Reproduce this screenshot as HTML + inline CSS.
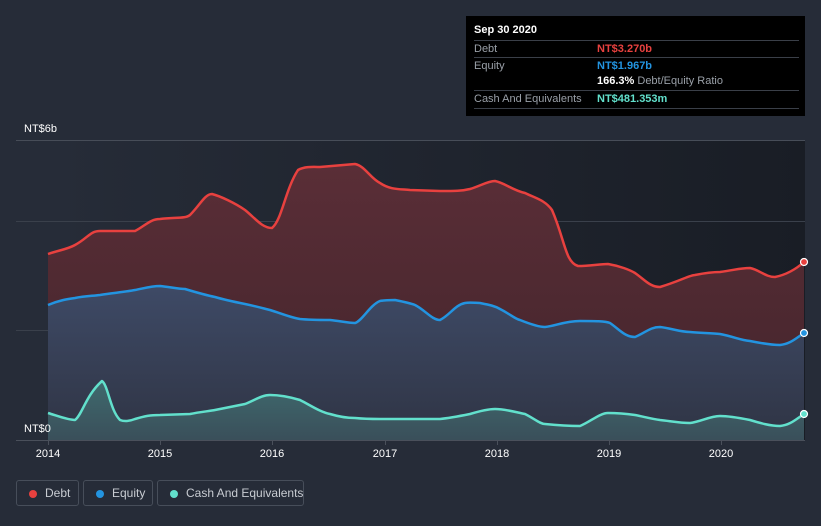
<!DOCTYPE html>
<html style="margin:0;width:821px;height:526px;overflow:hidden"><head><meta charset="utf-8"><style>
body{margin:0;width:821px;height:526px;background:#262c38;font-family:"Liberation Sans",sans-serif;overflow:hidden;position:relative}
.tt{position:absolute;left:466px;top:16px;width:339px;height:100px;background:#000;color:#fff;font-size:11px}
.tt .h{position:absolute;left:8px;top:8px;font-weight:bold}
.row{position:absolute;left:8px;width:325px;height:17px;border-top:1px solid #3a3f48;line-height:16px}
.row .l{position:absolute;left:0;color:#9aa0a8;white-space:nowrap}
.row .v{position:absolute;left:123px;font-weight:bold;white-space:nowrap}
.lg{position:absolute;top:480px;height:26px;border:1px solid #474e5a;border-radius:3px;color:#c8ccd2;font-size:12px;line-height:24px;box-sizing:border-box;white-space:nowrap}
.lg i{position:absolute;left:12px;top:9px;width:8px;height:8px;border-radius:50%}
.lg span{position:absolute;left:28px;white-space:nowrap}
</style></head><body>
<svg width="821" height="526" style="position:absolute;left:0;top:0">
<defs>
<linearGradient id="bg" x1="0" x2="1" y1="0" y2="0"><stop offset="0" stop-color="#262c38"/><stop offset="1" stop-color="#191d25"/></linearGradient>
<linearGradient id="dg" x1="0" x2="0" y1="0" y2="1"><stop offset="0" stop-color="#5a2e37"/><stop offset="1" stop-color="#42242b"/></linearGradient>
<linearGradient id="eg" x1="0" x2="0" y1="0" y2="1"><stop offset="0" stop-color="#3e4a66"/><stop offset="1" stop-color="#2f3444"/></linearGradient>
<linearGradient id="cg" x1="0" x2="0" y1="0" y2="1"><stop offset="0" stop-color="#3f6a6e"/><stop offset="1" stop-color="#3a4f5a"/></linearGradient>
</defs>
<rect x="48" y="141" width="757" height="299" fill="url(#bg)"/>
<line x1="16" x2="805" y1="140.5" y2="140.5" stroke="#474d58"/>
<line x1="16" x2="805" y1="221.5" y2="221.5" stroke="#3a404b"/>
<line x1="16" x2="805" y1="330.5" y2="330.5" stroke="#3a404b"/>
<path fill="url(#dg)" d="M48,254 C60,250 68,249 75,245 C88,238 90,231 100,231 L135,231 C145,226 150,219 160,219 C175,217 185,219 190,215 C200,205 205,194 212,194 C220,196 235,203 245,210 C255,218 262,228 272,228 C282,220 285,190 298,170 C305,166 315,167 320,167 L355,164 C365,166 370,178 380,183 C390,190 400,189 410,190 L440,191 C455,191 462,191 470,189 C480,186 488,181 495,181 C505,183 512,190 525,193 C535,198 545,200 552,210 C565,240 565,262 578,266 C590,266 600,264 608,264 C620,266 630,270 635,273 C645,280 650,287 660,287 C680,281 690,275 695,275 C705,273 712,272 720,272 C735,270 740,268 750,268 C760,270 765,277 775,277 C785,275 795,270 804,262 L804,440 L48,440Z"/>
<path fill="url(#eg)" d="M48,305 C60,300 68,299 75,298 C85,296 92,296 100,295 C112,293 125,292 135,290 C145,288 152,286 160,286 C170,287 178,289 185,289 C195,292 205,295 215,297 C225,300 235,302 245,304 C255,306 262,308 270,310 C280,313 292,318 300,319 C310,320 320,320 330,320 C340,321 348,323 355,323 C362,321 370,305 380,301 C385,300 390,300 395,300 C405,302 410,303 415,305 C425,310 432,320 440,320 C450,315 455,305 465,303 C470,302 475,303 480,303 C490,305 495,306 500,309 C510,314 515,319 520,320 C530,324 540,327 545,327 C555,326 565,321 580,321 C595,321 605,321 610,323 C620,330 625,337 635,337 C645,333 650,327 660,327 C670,328 680,332 690,332 C700,333 710,333 720,334 C735,337 740,340 750,341 C760,343 770,345 780,345 C790,344 795,339 804,333 L804,440 L48,440Z"/>
<path fill="url(#cg)" d="M48,413 C58,416 68,420 75,420 C82,415 86,395 102,381 C108,385 110,410 120,420 C125,422 130,421 135,419 C145,416 150,415 160,415 L190,414 C200,412 210,411 215,410 C225,408 235,406 245,404 C255,400 262,395 270,395 C280,395 290,397 300,400 C310,405 320,412 330,414 C340,417 348,418 355,418 C365,419 372,419 380,419 L440,419 C450,418 460,416 470,414 C480,411 488,409 495,409 C505,409 515,412 525,414 C535,419 540,424 545,424 C555,425 570,426 580,426 C590,422 600,413 608,413 C620,413 628,414 635,415 C645,417 652,419 660,420 C670,421 680,423 690,423 C700,422 710,416 720,416 C730,416 740,418 750,420 C760,423 770,426 780,426 C790,425 795,420 804,414 L804,440 L48,440Z"/>
<g fill="none" stroke-width="2.5" stroke-linejoin="round">
<path stroke="#e8413f" d="M48,254 C60,250 68,249 75,245 C88,238 90,231 100,231 L135,231 C145,226 150,219 160,219 C175,217 185,219 190,215 C200,205 205,194 212,194 C220,196 235,203 245,210 C255,218 262,228 272,228 C282,220 285,190 298,170 C305,166 315,167 320,167 L355,164 C365,166 370,178 380,183 C390,190 400,189 410,190 L440,191 C455,191 462,191 470,189 C480,186 488,181 495,181 C505,183 512,190 525,193 C535,198 545,200 552,210 C565,240 565,262 578,266 C590,266 600,264 608,264 C620,266 630,270 635,273 C645,280 650,287 660,287 C680,281 690,275 695,275 C705,273 712,272 720,272 C735,270 740,268 750,268 C760,270 765,277 775,277 C785,275 795,270 804,262"/>
<path stroke="#2394e0" d="M48,305 C60,300 68,299 75,298 C85,296 92,296 100,295 C112,293 125,292 135,290 C145,288 152,286 160,286 C170,287 178,289 185,289 C195,292 205,295 215,297 C225,300 235,302 245,304 C255,306 262,308 270,310 C280,313 292,318 300,319 C310,320 320,320 330,320 C340,321 348,323 355,323 C362,321 370,305 380,301 C385,300 390,300 395,300 C405,302 410,303 415,305 C425,310 432,320 440,320 C450,315 455,305 465,303 C470,302 475,303 480,303 C490,305 495,306 500,309 C510,314 515,319 520,320 C530,324 540,327 545,327 C555,326 565,321 580,321 C595,321 605,321 610,323 C620,330 625,337 635,337 C645,333 650,327 660,327 C670,328 680,332 690,332 C700,333 710,333 720,334 C735,337 740,340 750,341 C760,343 770,345 780,345 C790,344 795,339 804,333"/>
<path stroke="#62e0cc" d="M48,413 C58,416 68,420 75,420 C82,415 86,395 102,381 C108,385 110,410 120,420 C125,422 130,421 135,419 C145,416 150,415 160,415 L190,414 C200,412 210,411 215,410 C225,408 235,406 245,404 C255,400 262,395 270,395 C280,395 290,397 300,400 C310,405 320,412 330,414 C340,417 348,418 355,418 C365,419 372,419 380,419 L440,419 C450,418 460,416 470,414 C480,411 488,409 495,409 C505,409 515,412 525,414 C535,419 540,424 545,424 C555,425 570,426 580,426 C590,422 600,413 608,413 C620,413 628,414 635,415 C645,417 652,419 660,420 C670,421 680,423 690,423 C700,422 710,416 720,416 C730,416 740,418 750,420 C760,423 770,426 780,426 C790,425 795,420 804,414"/>
</g>
<circle cx="804" cy="262" r="3.5" fill="#e8413f" stroke="#fff" stroke-width="1.2"/>
<circle cx="804" cy="333" r="3.5" fill="#2394e0" stroke="#fff" stroke-width="1.2"/>
<circle cx="804" cy="414" r="3.5" fill="#62e0cc" stroke="#fff" stroke-width="1.2"/>
<line x1="16" x2="805" y1="440.5" y2="440.5" stroke="#4a505b"/>
<g stroke="#4a505b"><line x1="48.5" x2="48.5" y1="440" y2="445"/><line x1="160.5" x2="160.5" y1="440" y2="445"/><line x1="272.5" x2="272.5" y1="440" y2="445"/><line x1="385.5" x2="385.5" y1="440" y2="445"/><line x1="497.5" x2="497.5" y1="440" y2="445"/><line x1="609.5" x2="609.5" y1="440" y2="445"/><line x1="721.5" x2="721.5" y1="440" y2="445"/></g>
<g fill="#fff" font-size="11" text-anchor="middle" font-family="Liberation Sans,sans-serif">
<text x="48" y="457">2014</text><text x="160" y="457">2015</text><text x="272" y="457">2016</text><text x="385" y="457">2017</text><text x="497" y="457">2018</text><text x="609" y="457">2019</text><text x="721" y="457">2020</text>
<text x="24" y="132" text-anchor="start">NT$6b</text><text x="24" y="432" text-anchor="start">NT$0</text>
</g>
</svg>
<div class="tt">
<div class="h">Sep 30 2020</div>
<div class="row" style="top:24px"><span class="l">Debt</span><span class="v" style="color:#e8413f">NT$3.270b</span></div>
<div class="row" style="top:41px;border-bottom:none"><span class="l">Equity</span><span class="v" style="color:#2394e0">NT$1.967b</span></div>
<div class="row" style="top:57px;border-top:none"><span class="v">166.3% <span style="color:#9aa0a8;font-weight:normal">Debt/Equity Ratio</span></span></div>
<div class="row" style="top:74px;border-bottom:1px solid #3a3f48"><span class="l">Cash And Equivalents</span><span class="v" style="color:#62e0cc">NT$481.353m</span></div>
</div>
<div class="lg" style="left:16px;width:63px"><i style="background:#e8413f"></i><span>Debt</span></div>
<div class="lg" style="left:83px;width:70px"><i style="background:#2394e0"></i><span>Equity</span></div>
<div class="lg" style="left:157px;width:147px"><i style="background:#62e0cc"></i><span>Cash And Equivalents</span></div>
</body></html>
